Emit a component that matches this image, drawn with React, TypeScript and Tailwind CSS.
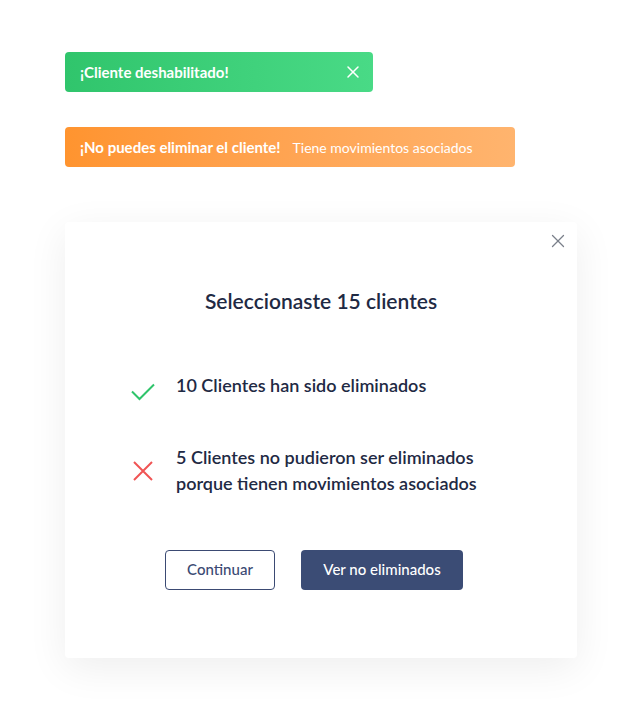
import { X } from "lucide-react";

export default function App() {
  return (
    <div className="min-h-[710px] bg-white pl-[65px] pt-[52px] font-['Lato',sans-serif]">
      <div className="flex h-10 w-[308px] items-center justify-between rounded bg-gradient-to-r from-[#30c56c] to-[#49da86] pl-[15px] pr-[10px] text-white">
        <span className="text-[15px] font-bold">¡Cliente deshabilitado!</span>
        <X size={20} strokeWidth={1.8} />
      </div>

      <div className="mt-[35px] flex h-10 w-[450px] items-center gap-3 rounded bg-gradient-to-r from-[#ff942f] to-[#ffb46e] pl-[15px] text-white">
        <span className="text-[15px] font-bold">¡No puedes eliminar el cliente!</span>
        <span className="text-[14px]">Tiene movimientos asociados</span>
      </div>

      <div className="relative mt-[55px] h-[436px] w-[512px] rounded bg-white shadow-[0_10px_40px_rgba(0,0,0,0.07)]">
        <button className="absolute right-[8px] top-[8px] text-[#7a7f8a]">
          <X size={22} strokeWidth={1.4} />
        </button>

        <h2 className="pt-[63px] text-center text-[21px] font-semibold text-[#1f2a44]">Seleccionaste 15 clientes</h2>

        <div className="mt-[52px] flex flex-col gap-[43px] pl-[66px] text-[18px] font-semibold leading-[26px] text-[#1f2a44]">
          <div className="flex items-center gap-[21px]">
            <svg width="24" height="18" viewBox="0 0 24 18" className="mt-[14px]" fill="none" stroke="#2fc46b" strokeWidth="2">
              <path d="M1 8.5 8.5 16 23 1.5" />
            </svg>
            <span>10 Clientes han sido eliminados</span>
          </div>
          <div className="flex items-center gap-[23px]">
            <svg width="20" height="20" viewBox="0 0 20 20" className="ml-[2px] mt-[2px]" fill="none" stroke="#f05454" strokeWidth="2">
              <path d="M1 1 19 19M19 1 1 19" />
            </svg>
            <span>
              5 Clientes no pudieron ser eliminados
              <br />
              porque tienen movimientos asociados
            </span>
          </div>
        </div>

        <div className="mt-[54px] flex justify-center gap-[26px] pr-[14px] text-[15px] font-medium">
          <button className="h-10 w-[110px] rounded border border-[#3b4a73] text-[#3b4a73]">Continuar</button>
          <button className="h-10 w-[162px] rounded bg-[#3b4c75] text-white">Ver no eliminados</button>
        </div>
      </div>
    </div>
  );
}
